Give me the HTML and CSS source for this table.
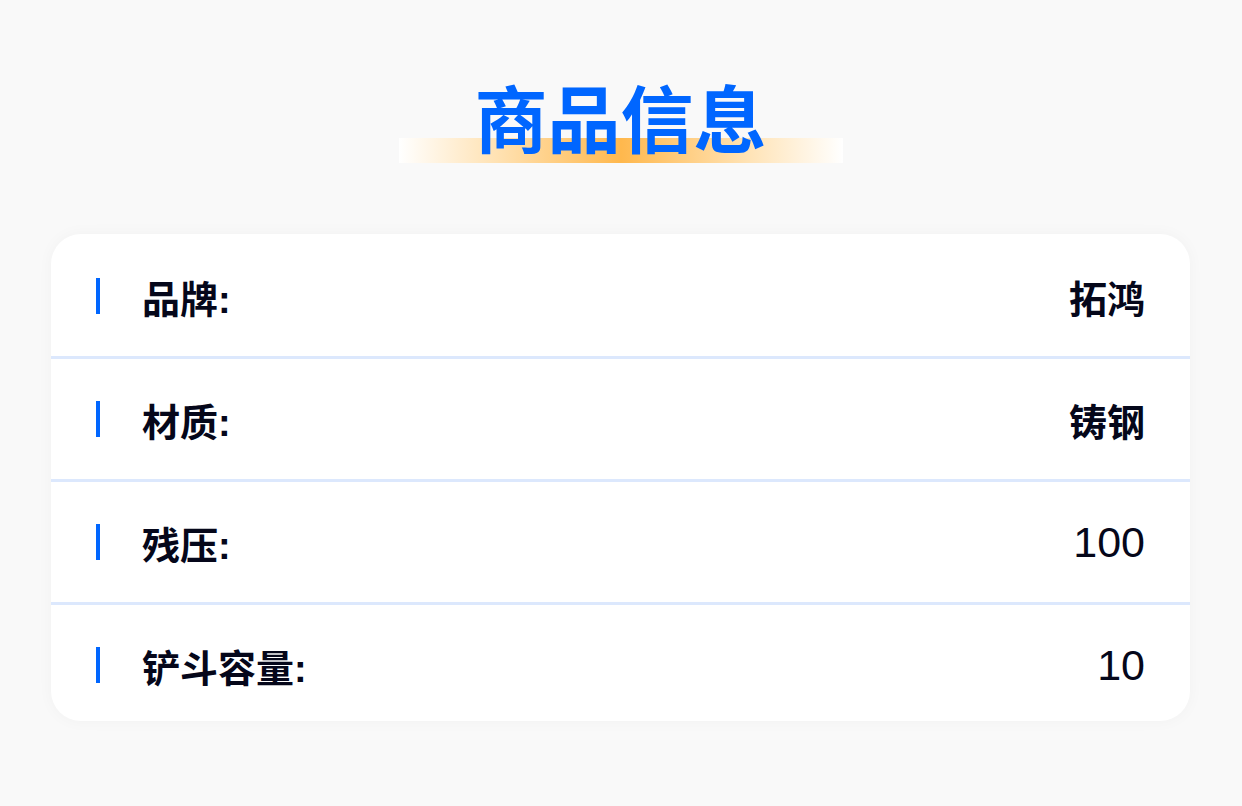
FILE: index.html
```html
<!DOCTYPE html>
<html lang="zh">
<head>
<meta charset="utf-8">
<title>商品信息</title>
<link rel="stylesheet" href="styles.css">
</head>
<body>
<div class="page">
  <header class="head">
    <h1 class="title">商品信息</h1>
  </header>
  <section class="card">
    <div class="row">
      <span class="mark"></span>
      <span class="label">品牌:</span>
      <span class="value">拓鸿</span>
    </div>
    <div class="row">
      <span class="mark"></span>
      <span class="label">材质:</span>
      <span class="value">铸钢</span>
    </div>
    <div class="row">
      <span class="mark"></span>
      <span class="label">残压:</span>
      <span class="value num">100</span>
    </div>
    <div class="row last">
      <span class="mark"></span>
      <span class="label">铲斗容量:</span>
      <span class="value num">10</span>
    </div>
  </section>
</div>
</body>
</html>
```

FILE: styles.css
```css
* { box-sizing: border-box; }
html, body {
  margin: 0;
  padding: 0;
  background: #f9f9f9;
  font-family: "Liberation Sans", "Noto Sans CJK SC", sans-serif;
}
.page {
  width: 1242px;
  height: 806px;
  padding: 0 52px 0 51px;
  display: flex;
  flex-direction: column;
}
.head {
  display: flex;
  justify-content: center;
  padding-top: 78px;
  height: 234px;
}
.title {
  position: relative;
  margin: 0;
  width: 444px;
  height: 88px;
  text-align: center;
  font-size: 73px;
  line-height: 88px;
  font-weight: 600;
  color: #0066ff;
  z-index: 0;
}
.title::after {
  content: "";
  position: absolute;
  left: 0;
  right: 0;
  top: 60px;
  height: 25px;
  background: linear-gradient(90deg, #ffffff 0%, #ffe2b3 22%, #ffb84d 50%, #ffe2b3 78%, #ffffff 100%);
  z-index: -1;
}
.card {
  background: #ffffff;
  border-radius: 30px;
  box-shadow: 0 0 16px rgba(0, 0, 0, 0.035);
  padding-top: 2px;
  height: 487px;
  overflow: hidden;
  display: flex;
  flex-direction: column;
}
.row {
  height: 123px;
  flex: 0 0 123px;
  display: flex;
  align-items: center;
  padding: 0 45px 0 45px;
  border-bottom: 3px solid #dce8fd;
}
.row.last {
  border-bottom: none;
  flex: 0 0 120px;
}
.mark {
  width: 4px;
  height: 36px;
  background: #0066ff;
  margin-right: 42px;
}
.label {
  font-size: 38px;
  font-weight: 700;
  color: #05071a;
  flex: 1;
}
.value {
  font-size: 38px;
  font-weight: 700;
  color: #05071a;
}
.value.num {
  font-size: 43px;
  font-weight: 400;
}
```
